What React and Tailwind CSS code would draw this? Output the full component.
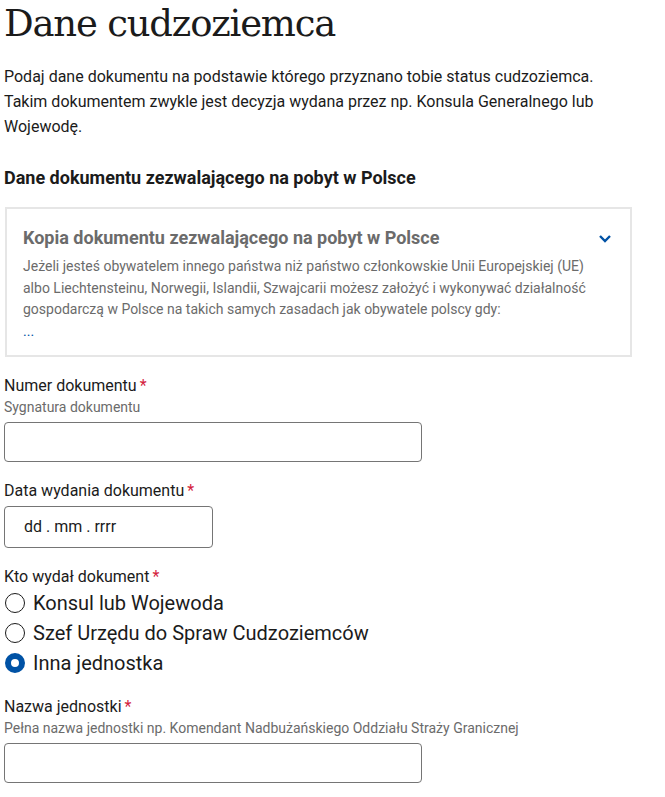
import React from "react";

function Req() {
  return <span className="text-[#d4213d] ml-[3px]">*</span>;
}

function Radio({ checked, label }) {
  return (
    <label className="flex items-center h-[30px]">
      {checked ? (
        <span className="w-[20px] h-[20px] rounded-full border-[6px] border-[#0052a5] bg-white box-border ml-[1px]" />
      ) : (
        <span className="w-[20px] h-[20px] rounded-full border-[1.5px] border-[#1b1b1b] bg-white box-border ml-[1px]" />
      )}
      <span className="ml-[8px] text-[20px] text-[#1b1b1b]">{label}</span>
    </label>
  );
}

export default function App() {
  return (
    <div className="bg-white min-h-[797px] px-[4px] font-['Roboto',sans-serif] text-[#1b1b1b]">
      <h1 className="font-['DejaVu_Serif',serif] text-[37px] leading-[46px] pt-[1px] tracking-[-1.2px]">Dane cudzoziemca</h1>
      <p className="mt-[17px] text-[16px] leading-[25px]">
        Podaj dane dokumentu na podstawie którego przyznano tobie status cudzoziemca.
        <br />
        Takim dokumentem zwykle jest decyzja wydana przez np. Konsula Generalnego lub Wojewodę.
      </p>
      <h2 className="mt-[27px] text-[18px] leading-[24px] font-bold">Dane dokumentu zezwalającego na pobyt w Polsce</h2>
      <div className="mt-[17px] ml-[1px] w-[627px] border-2 border-[#e6e6e6] pt-[16px] pb-[13px] pl-[16px] pr-[18px]">
        <div className="flex items-center justify-between">
          <span className="text-[18px] leading-[26px] font-bold text-[#6b6b6b]">Kopia dokumentu zezwalającego na pobyt w Polsce</span>
          <svg width="14" height="10" viewBox="0 0 14 10">
            <path d="M2 3 L7 8 L12 3" fill="none" stroke="#0052a5" strokeWidth="2.4" />
          </svg>
        </div>
        <p className="mt-[5px] text-[14px] leading-[21.5px] text-[#6b6b6b]">
          Jeżeli jesteś obywatelem innego państwa niż państwo członkowskie Unii Europejskiej (UE) albo Liechtensteinu, Norwegii, Islandii, Szwajcarii możesz założyć i wykonywać działalność gospodarczą w Polsce na takich samych zasadach jak obywatele polscy gdy:
        </p>
        <p className="text-[14px] leading-[21px] text-[#0052a5]">...</p>
      </div>

      <div className="mt-[18px]">
        <div className="text-[16px] leading-[22px]">Numer dokumentu<Req /></div>
        <div className="text-[14px] leading-[20px] text-[#6b6b6b]">Sygnatura dokumentu</div>
        <div className="mt-[5px] w-[418px] h-[40px] border border-[#757575] rounded-[4px]" />
      </div>

      <div className="mt-[18px]">
        <div className="text-[16px] leading-[22px]">Data wydania dokumentu<Req /></div>
        <div className="mt-[4px] w-[209px] h-[42px] border border-[#757575] rounded-[4px] flex items-center pl-[19px] text-[16px]">dd . mm . rrrr</div>
      </div>

      <div className="mt-[18px]">
        <div className="text-[16px] leading-[22px]">Kto wydał dokument<Req /></div>
        <div className="flex flex-col">
          <Radio label="Konsul lub Wojewoda" />
          <Radio label="Szef Urzędu do Spraw Cudzoziemców" />
          <Radio checked label="Inna jednostka" />
        </div>
      </div>

      <div className="mt-[18px]">
        <div className="text-[16px] leading-[22px]">Nazwa jednostki<Req /></div>
        <div className="text-[14px] leading-[20px] text-[#6b6b6b]">Pełna nazwa jednostki np. Komendant Nadbużańskiego Oddziału Straży Granicznej</div>
        <div className="mt-[5px] w-[418px] h-[40px] border border-[#757575] rounded-[4px]" />
      </div>
    </div>
  );
}
